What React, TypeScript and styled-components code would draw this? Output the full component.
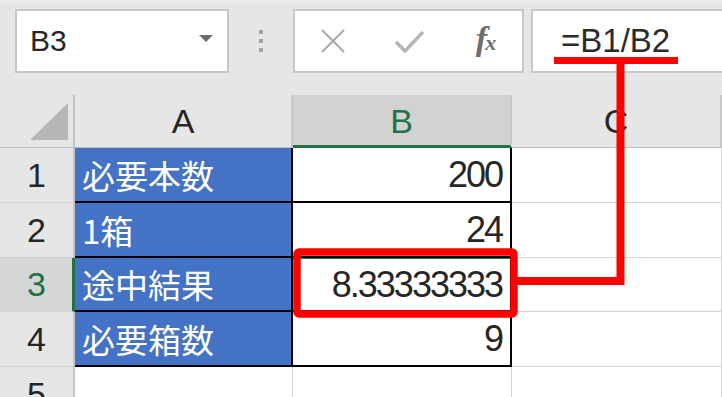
import React from "react";
import styled, { createGlobalStyle } from "styled-components";

const Global = createGlobalStyle`
  html, body { margin: 0; padding: 0; background: #e6e6e6; overflow: hidden; }
  * { box-sizing: border-box; }
`;

const Page = styled.div`
  position: relative;
  width: 722px;
  height: 397px;
  overflow: hidden;
  background: #e6e6e6;
  font-family: "Liberation Sans", "Noto Sans CJK JP", sans-serif;
  color: #262626;
`;

const Toolbar = styled.div`
  display: flex;
  align-items: flex-start;
  height: 95px;
  padding: 6px 0 0 15px;
  border-top: 3px solid #ececec;
`;

const NameBox = styled.div`
  width: 214px;
  height: 64px;
  flex: none;
  display: flex;
  align-items: center;
  justify-content: space-between;
  padding: 0 14px 0 13px;
  background: #fff;
  border: 2px solid #c6c6c6;
  font-size: 30px;
  color: #262626;
`;

const Arrow = styled.span`
  width: 0;
  height: 0;
  border-left: 7px solid transparent;
  border-right: 7px solid transparent;
  border-top: 7px solid #6d6d6d;
  margin-top: -6px;
`;

const Grip = styled.div`
  width: 64px;
  height: 64px;
  flex: none;
  display: flex;
  flex-direction: column;
  align-items: center;
  justify-content: center;
  gap: 5px;
`;

const Dot = styled.span`
  width: 4px;
  height: 4px;
  background: #a3a3a3;
`;

const ButtonBox = styled.div`
  width: 231px;
  height: 64px;
  flex: none;
  display: flex;
  align-items: center;
  gap: 40px;
  padding-left: 20px;
  background: #fff;
  border: 2px solid #c8c8c8;
`;

const IconSlot = styled.div`
  width: 36px;
  height: 36px;
  display: flex;
  align-items: center;
  justify-content: center;
`;

const Fx = styled.span`
  font-family: "Liberation Serif", "DejaVu Serif", serif;
  font-style: italic;
  font-weight: bold;
  color: #6e6e6e;
  font-size: 34px;
  line-height: 1;
  letter-spacing: -2px;
  margin-top: -4px;
  sub {
    font-size: 22px;
    vertical-align: baseline;
  }
`;

const FormulaBox = styled.div`
  flex: 1;
  height: 64px;
  margin-left: 7px;
  margin-right: -20px;
  display: flex;
  align-items: center;
  padding-left: 28px;
  background: #fff;
  border: 2px solid #c8c8c8;
  font-size: 33px;
  color: #2b2b2b;
`;

const Sheet = styled.div`
  display: grid;
  grid-template-columns: 75px 218px 219px 1fr;
  grid-template-rows: 53px 55px 55px 54px 55px 55px;
  height: 302px;
  overflow: hidden;
  background: #fff;
`;

const Corner = styled.div`
  background: #e6e6e6;
  border-right: 2px solid #c4c4c4;
  border-bottom: 1px solid #bdbdbd;
  display: flex;
  align-items: flex-end;
  justify-content: flex-end;
  padding: 0 5px 7px 0;
`;

const Triangle = styled.div`
  width: 38px;
  height: 37px;
  background: #b6b6b6;
  clip-path: polygon(100% 0, 100% 100%, 0 100%);
`;

const ColHeader = styled.div<{ $sel?: boolean }>`
  display: flex;
  align-items: center;
  justify-content: center;
  background: ${(p) => (p.$sel ? "#d2d2d2" : "#e6e6e6")};
  color: ${(p) => (p.$sel ? "#217346" : "#262626")};
  border-right: 2px solid #c8c8c8;
  border-bottom: ${(p) => (p.$sel ? "3px solid #217346" : "1px solid #bdbdbd")};
  font-size: 34px;
  padding-top: ${(p) => (p.$sel ? "3px" : "0")};
`;

const RowHeader = styled.div<{ $sel?: boolean }>`
  display: flex;
  align-items: center;
  justify-content: center;
  background: ${(p) => (p.$sel ? "#d6d6d6" : "#e6e6e6")};
  color: ${(p) => (p.$sel ? "#217346" : "#262626")};
  border-right: ${(p) => (p.$sel ? "3px solid #217346" : "2px solid #c4c4c4")};
  border-bottom: 1px solid #d2d2d2;
  font-size: 34px;
  padding-left: ${(p) => (p.$sel ? "1px" : "0")};
  overflow: hidden;
`;

const Cell = styled.div<{ $kind: "label" | "value" | "empty"; $active?: boolean }>`
  display: flex;
  align-items: center;
  overflow: hidden;
  white-space: nowrap;
  background: ${(p) => (p.$kind === "label" ? "#4472c4" : "#fff")};
  color: ${(p) => (p.$kind === "label" ? "#fff" : "#262626")};
  justify-content: ${(p) => (p.$kind === "value" ? "flex-end" : "flex-start")};
  padding: ${(p) => (p.$kind === "value" ? "0 8px 0 0" : "0 0 0 7px")};
  border-right: ${(p) => (p.$kind === "empty" ? "1px solid #d4d4d4" : "2px solid #000")};
  border-bottom: ${(p) => (p.$kind === "empty" ? "1px solid #d4d4d4" : "2px solid #000")};
  border-top: ${(p) => (p.$active ? "1px solid #217346" : "none")};
  font-size: ${(p) => (p.$kind === "label" ? "33px" : "36px")};
  letter-spacing: ${(p) => (p.$kind === "value" ? "-2px" : "0")};
  font-family: ${(p) =>
    p.$kind === "label"
      ? `"Noto Sans CJK JP", "Liberation Sans", sans-serif`
      : `"Liberation Sans", "Noto Sans CJK JP", sans-serif`};
`;

const Annotation = styled.svg`
  position: absolute;
  left: 0;
  top: 0;
  pointer-events: none;
`;

const rows: { n: number; label?: string; value?: string }[] = [
  { n: 1, label: "必要本数", value: "200" },
  { n: 2, label: "1箱", value: "24" },
  { n: 3, label: "途中結果", value: "8.33333333" },
  { n: 4, label: "必要箱数", value: "9" },
  { n: 5 },
];

export default function App() {
  return (
    <Page>
      <Global />
      <Toolbar>
        <NameBox>
          <span>B3</span>
          <Arrow />
        </NameBox>
        <Grip>
          <Dot />
          <Dot />
          <Dot />
        </Grip>
        <ButtonBox>
          <IconSlot>
            <svg width="36" height="36" viewBox="0 0 36 36">
              <path d="M7 7 L29 29 M29 7 L7 29" stroke="#a8a8a8" strokeWidth="2" fill="none" />
            </svg>
          </IconSlot>
          <IconSlot>
            <svg width="36" height="36" viewBox="0 0 36 36">
              <path d="M5 19 L14 28 L32 9" stroke="#b6b6b6" strokeWidth="3.5" fill="none" strokeLinejoin="round" />
            </svg>
          </IconSlot>
          <IconSlot>
            <Fx>
              f<sub>x</sub>
            </Fx>
          </IconSlot>
        </ButtonBox>
        <FormulaBox>=B1/B2</FormulaBox>
      </Toolbar>
      <Sheet>
        <Corner>
          <Triangle />
        </Corner>
        <ColHeader>A</ColHeader>
        <ColHeader $sel>B</ColHeader>
        <ColHeader>C</ColHeader>
        {rows.map((r) => (
          <React.Fragment key={r.n}>
            <RowHeader $sel={r.n === 3}>{r.n}</RowHeader>
            {r.label ? (
              <>
                <Cell $kind="label">{r.label}</Cell>
                <Cell $kind="value" $active={r.n === 3}>{r.value}</Cell>
              </>
            ) : (
              <>
                <Cell $kind="empty" />
                <Cell $kind="empty" />
              </>
            )}
            <Cell $kind="empty" />
          </React.Fragment>
        ))}
      </Sheet>
      <Annotation width="722" height="397" viewBox="0 0 722 397">
        <path d="M554 60.5 H678" stroke="#ff0000" strokeWidth="7" fill="none" />
        <path d="M516 281 H620.5 V57" stroke="#ff0000" strokeWidth="8" fill="none" strokeLinejoin="miter" />
        <rect x="297" y="252" width="217" height="62" rx="2" stroke="#ff0000" strokeWidth="7.5" fill="none" />
      </Annotation>
    </Page>
  );
}
